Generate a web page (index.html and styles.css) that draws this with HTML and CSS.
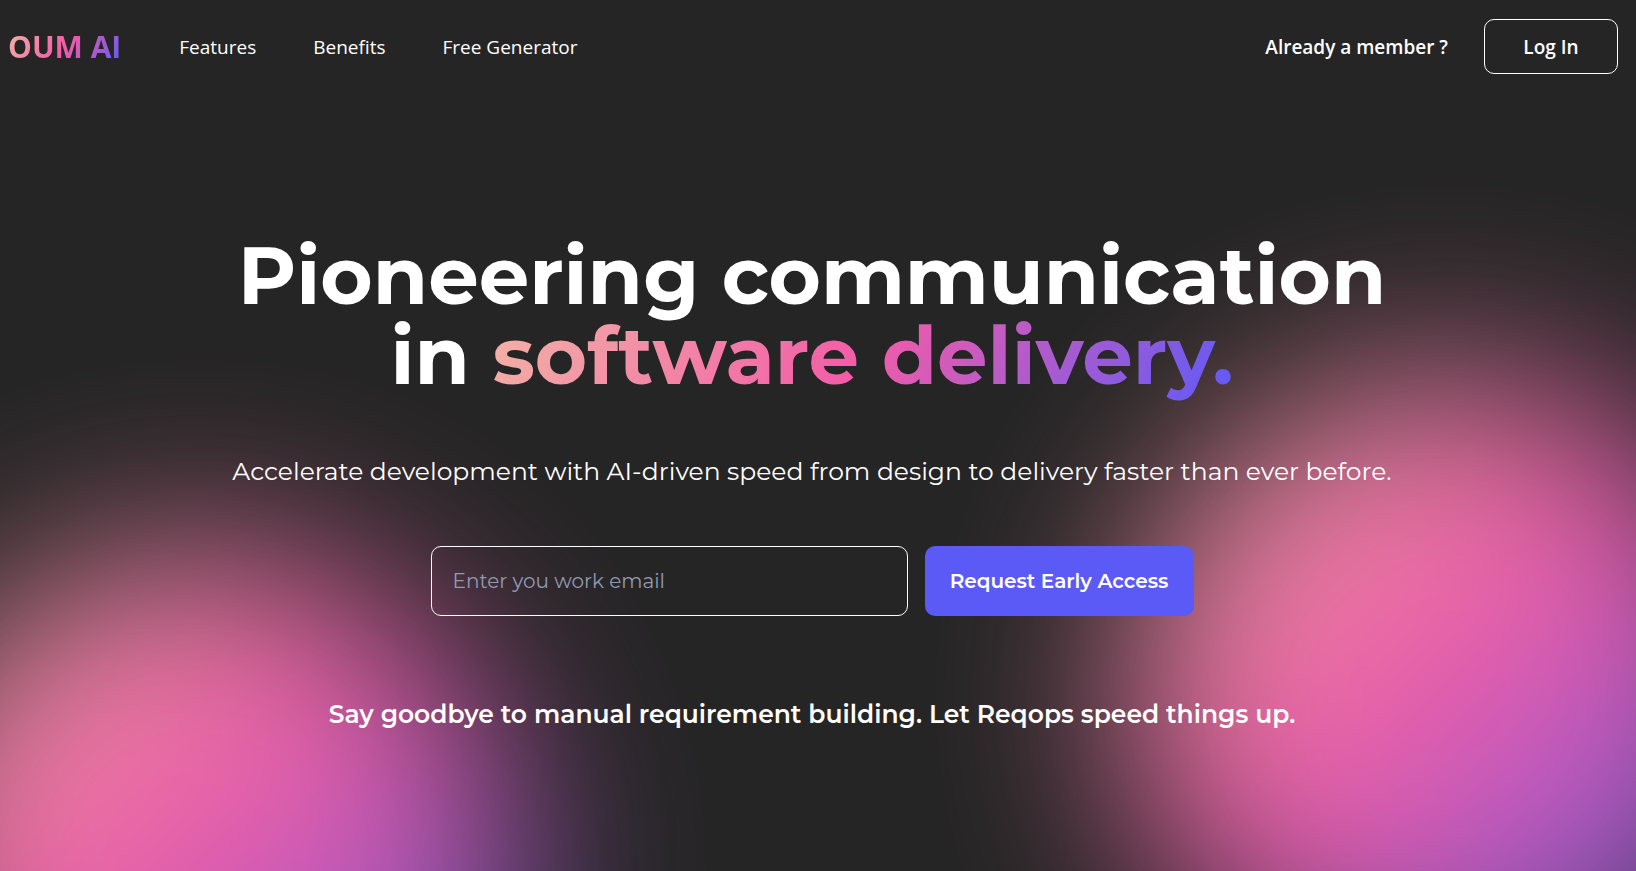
FILE: index.html
```html
<!DOCTYPE html>
<html lang="en">
<head>
<meta charset="utf-8">
<meta name="viewport" content="width=device-width, initial-scale=1">
<title>OUM AI</title>
<link rel="stylesheet" href="styles.css">
</head>
<body class="page">
<div class="backdrop" aria-hidden="true">
  <div class="glow glow-left"></div>
  <div class="glow glow-right"></div>
</div>
<header class="header">
  <a class="brand gradient-text" href="#">OUM AI</a>
  <nav class="nav">
    <a class="nav-link" href="#features">Features</a>
    <a class="nav-link" href="#benefits">Benefits</a>
    <a class="nav-link" href="#generator">Free Generator</a>
  </nav>
  <div class="account">
    <span class="member">Already a member ?</span>
    <button class="login" type="button">Log In</button>
  </div>
</header>
<main class="hero">
  <h1 class="title">Pioneering communication<br>in <span class="gradient-text">software delivery.</span></h1>
  <p class="lead">Accelerate development with AI-driven speed from design to delivery faster than ever before.</p>
  <form class="signup">
    <input class="email" type="email" placeholder="Enter you work email" aria-label="Work email">
    <button class="request" type="submit">Request Early Access</button>
  </form>
  <p class="note">Say goodbye to manual requirement building. Let Reqops speed things up.</p>
</main>
</body>
</html>
```
FILE: styles.css
```css
* {
  box-sizing: border-box;
}

.page {
  position: relative;
  min-height: 100vh;
  margin: 0;
  background: #252525;
  color: #fff;
  font-family: Montserrat, Inter, sans-serif;
}

.backdrop {
  position: absolute;
  inset: 0;
  overflow: hidden;
}

.glow {
  position: absolute;
  width: 640px;
  height: 640px;
  border-radius: 50%;
  background: linear-gradient(135deg, #f2b5a5 0%, #f25ca8 47%, #5d5af8 100%);
  filter: blur(96px);
  opacity: 0.98;
}

.glow-left {
  left: -120px;
  top: 550px;
}

.glow-right {
  right: -130px;
  top: 376px;
}

.header,
.hero {
  position: relative;
}

.header {
  display: flex;
  align-items: center;
  padding: 19px 18px 0 8px;
  font-family: "Segoe UI", "Open Sans", sans-serif;
  font-size: 19px;
}

.gradient-text {
  background: linear-gradient(120deg, #f2b5a5 0%, #f25ca8 50%, #5d5af8 100%);
  background-clip: text;
  -webkit-background-clip: text;
  color: transparent;
}

.brand {
  font-size: 30px;
  font-weight: 700;
  text-decoration: none;
}

.nav {
  display: flex;
  gap: 57px;
  margin-left: 58px;
}

.nav-link {
  color: inherit;
  text-decoration: none;
}

.account {
  display: flex;
  align-items: center;
  gap: 36px;
  margin-left: auto;
  font-weight: 600;
}

.login {
  width: 134px;
  height: 55px;
  border: 1px solid #fff;
  border-radius: 10px;
  background: transparent;
  color: inherit;
  font: inherit;
}

.hero {
  display: flex;
  flex-direction: column;
  align-items: center;
  padding: 162px 12px 0 0;
  text-align: center;
}

.title {
  margin: 0;
  font-size: 80px;
  font-weight: 700;
  line-height: 80px;
}

.lead {
  margin: 55px 0 0;
  font-size: 25px;
  line-height: 40px;
}

.signup {
  display: flex;
  gap: 17px;
  margin: 55px 0 0;
}

.email {
  width: 477px;
  height: 70px;
  padding: 0 21px;
  border: 1px solid #fff;
  border-radius: 10px;
  background: transparent;
  color: inherit;
  font: inherit;
  font-size: 20px;
}

.email::placeholder {
  color: #8f9bb3;
}

.request {
  width: 269px;
  border: 0;
  border-radius: 10px;
  background: #5c5af6;
  color: inherit;
  font: inherit;
  font-size: 20px;
  font-weight: 600;
}

.note {
  margin: 78px 0 0;
  font-size: 25px;
  font-weight: 600;
  line-height: 40px;
}
```
